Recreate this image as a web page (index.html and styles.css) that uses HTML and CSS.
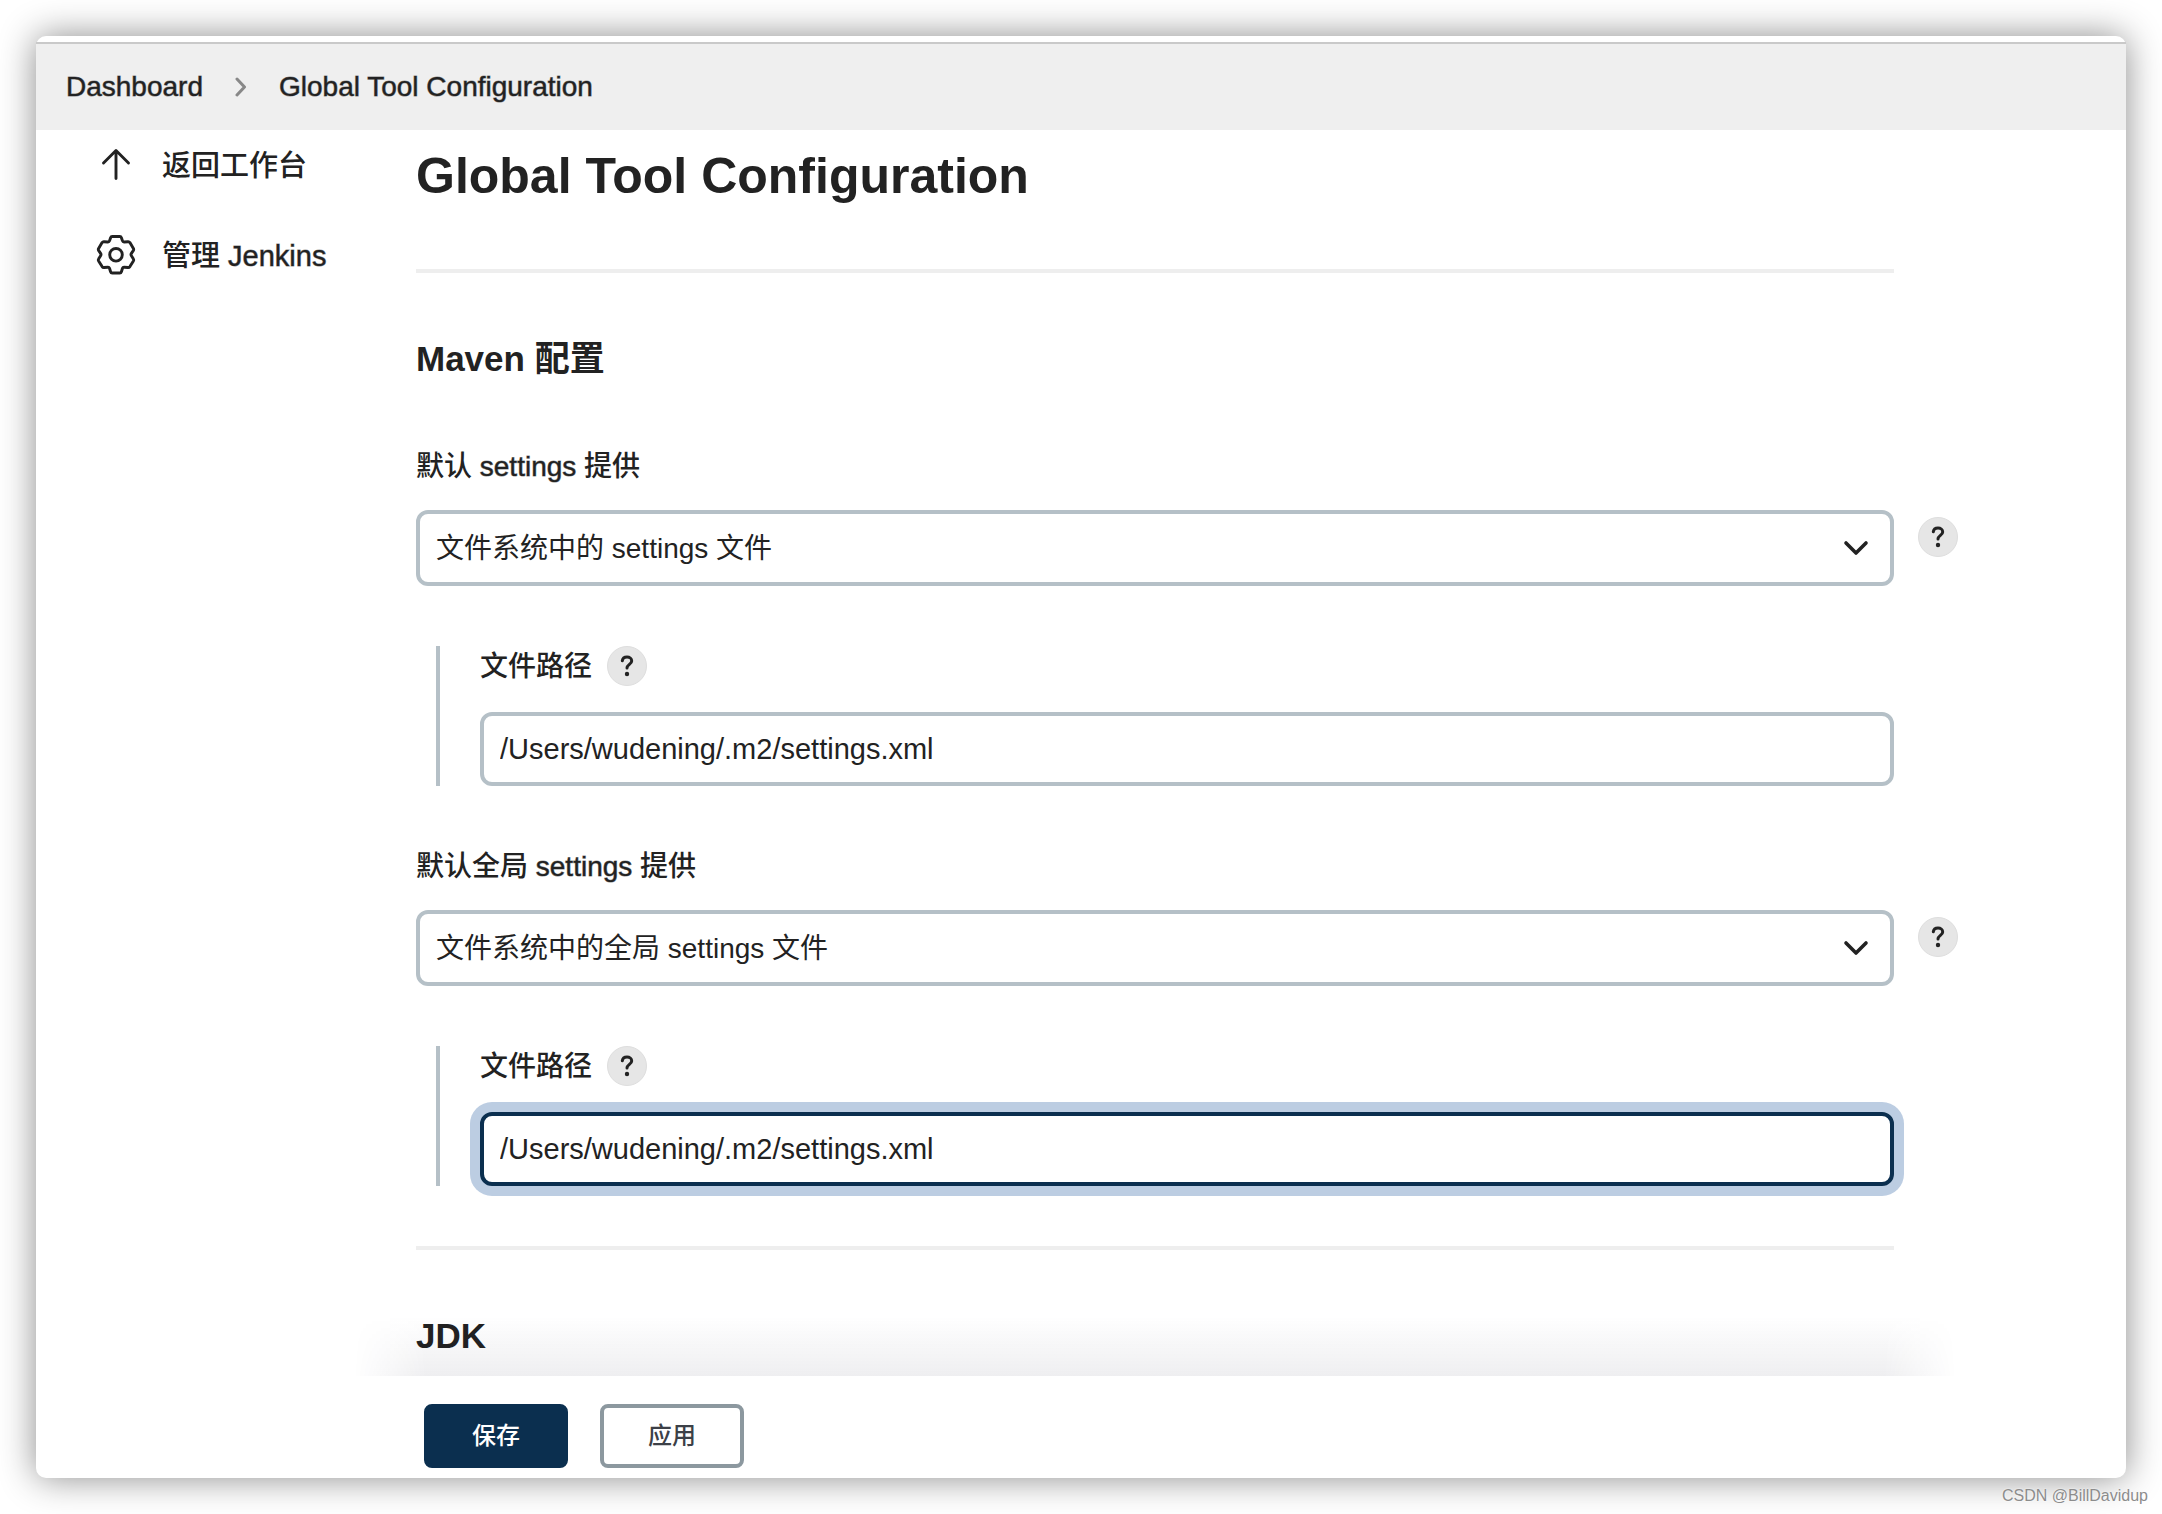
FILE: index.html
```html
<!DOCTYPE html>
<html lang="zh-CN">
<head>
<meta charset="utf-8">
<meta name="viewport" content="width=device-width, initial-scale=1">
<title>Global Tool Configuration</title>
<link rel="stylesheet" href="styles.css">
</head>
<body>
<div class="window">
  <nav class="breadcrumbs" aria-label="Breadcrumb">
    <a class="latin" href="#">Dashboard</a>
    <svg class="crumb-arrow" width="12" height="20" viewBox="0 0 12 20" fill="none" stroke="currentColor" stroke-width="3" stroke-linecap="round" stroke-linejoin="round"><path d="M2 2l7.500 8L2 18"/></svg>
    <a class="latin" href="#">Global Tool Configuration</a>
  </nav>

  <div class="page">
    <aside class="sidebar">
      <a class="task" href="#">
        <svg class="task-icon" width="40" height="42" viewBox="0 0 40 42" fill="none" stroke="currentColor" stroke-width="2.900" stroke-linecap="round" stroke-linejoin="round"><path d="M7.500 19L20 6.500 32.500 19M20 7v27.500"/></svg>
        <span class="task-text">返回工作台</span>
      </a>
      <a class="task" href="#">
        <svg class="task-icon" width="40" height="42" viewBox="0 0 40 42" fill="none" stroke="currentColor" stroke-width="2.900" stroke-linejoin="round"><path d="M16.200 2.500h7.600q1.200 0 1.600 1.200l1.100 3.200q.4 1.200 1.700 1.100l3.800-.3q1.200-.1 1.900.9l3.500 5.900q.6 1.100-.1 2.100l-1.900 2.800q-.8 1.200 0 2.400l1.900 3q.7 1 .1 2.100l-3.500 5.700q-.7 1-1.900.9l-3.800-.3q-1.300-.1-1.700 1.100l-1.100 3.400q-.4 1.300-1.600 1.300h-7.600q-1.200 0-1.600-1.300l-1.100-3.400q-.4-1.200-1.700-1.100l-3.800.3q-1.200.1-1.900-.9l-3.500-5.700q-.6-1.100.1-2.100l1.900-3q.8-1.200 0-2.400l-1.900-2.800q-.7-1-.1-2.100l3.500-5.900q.7-1 1.900-.9l3.800.3q1.300.1 1.700-1.100l1.100-3.200q.4-1.200 1.600-1.200z"/><circle cx="20" cy="20.800" r="6.300"/></svg>
        <span class="task-text">管理 <span class="latin">Jenkins</span></span>
      </a>
    </aside>

    <main class="main">
      <form class="form">
        <h1>Global Tool Configuration</h1>

        <section class="section">
          <h2>Maven 配置</h2>

          <label class="label" for="settings">默认 <span class="latin">settings</span> 提供</label>
          <div class="select-row">
            <div class="select-box">
              <select id="settings" class="control select"><option>文件系统中的 settings 文件</option></select>
              <svg class="chevron" width="28" height="18" viewBox="0 0 28 18" fill="none" stroke="currentColor" stroke-width="3.600" stroke-linecap="round" stroke-linejoin="round"><path d="M4 4l10 10L24 4"/></svg>
            </div>
            <button class="help" type="button" aria-label="Help"><svg width="14" height="22" viewBox="0 0 14 22" fill="none" stroke="currentColor" stroke-width="3" stroke-linecap="round" stroke-linejoin="round"><path d="M2.300 5.800C2.600 3.300 4.400 2 7 2s4.700 1.500 4.700 3.900c0 3.300-4.700 3.600-4.700 7.100"/><circle cx="7" cy="19" r="2.200" fill="currentColor" stroke="none"/></svg></button>
          </div>
          <div class="nested">
            <div class="nested-head">
              <label class="label" for="path">文件路径</label>
              <button class="help" type="button" aria-label="Help"><svg width="14" height="22" viewBox="0 0 14 22" fill="none" stroke="currentColor" stroke-width="3" stroke-linecap="round" stroke-linejoin="round"><path d="M2.300 5.800C2.600 3.300 4.400 2 7 2s4.700 1.500 4.700 3.900c0 3.300-4.700 3.600-4.700 7.100"/><circle cx="7" cy="19" r="2.200" fill="currentColor" stroke="none"/></svg></button>
            </div>
            <input id="path" class="control input" type="text" value="/Users/wudening/.m2/settings.xml" spellcheck="false">
          </div>

          <label class="label" for="global-settings">默认全局 <span class="latin">settings</span> 提供</label>
          <div class="select-row">
            <div class="select-box">
              <select id="global-settings" class="control select"><option>文件系统中的全局 settings 文件</option></select>
              <svg class="chevron" width="28" height="18" viewBox="0 0 28 18" fill="none" stroke="currentColor" stroke-width="3.600" stroke-linecap="round" stroke-linejoin="round"><path d="M4 4l10 10L24 4"/></svg>
            </div>
            <button class="help" type="button" aria-label="Help"><svg width="14" height="22" viewBox="0 0 14 22" fill="none" stroke="currentColor" stroke-width="3" stroke-linecap="round" stroke-linejoin="round"><path d="M2.300 5.800C2.600 3.300 4.400 2 7 2s4.700 1.500 4.700 3.900c0 3.300-4.700 3.600-4.700 7.100"/><circle cx="7" cy="19" r="2.200" fill="currentColor" stroke="none"/></svg></button>
          </div>
          <div class="nested">
            <div class="nested-head">
              <label class="label" for="global-path">文件路径</label>
              <button class="help" type="button" aria-label="Help"><svg width="14" height="22" viewBox="0 0 14 22" fill="none" stroke="currentColor" stroke-width="3" stroke-linecap="round" stroke-linejoin="round"><path d="M2.300 5.800C2.600 3.300 4.400 2 7 2s4.700 1.500 4.700 3.900c0 3.300-4.700 3.600-4.700 7.100"/><circle cx="7" cy="19" r="2.200" fill="currentColor" stroke="none"/></svg></button>
            </div>
            <input id="global-path" class="control input is-focused" type="text" value="/Users/wudening/.m2/settings.xml" spellcheck="false">
          </div>
        </section>

        <section class="section">
          <h2>JDK</h2>
        </section>

        <div class="actions">
          <button class="button primary" type="submit">保存</button>
          <button class="button" type="button">应用</button>
        </div>
      </form>
    </main>
  </div>
</div>
<p class="watermark">CSDN @BillDavidup</p>
</body>
</html>
```
FILE: styles.css
```css
:root {
  --text: #222;
  --line: #eee;
  --border: #b5c0c7;
  --navy: #0b2f4f;
}

* {
  box-sizing: border-box;
}

body {
  position: relative;
  min-height: 100vh;
  margin: 0;
  padding: 36px;
  background: #fff;
  color: var(--text);
  font: 28px/40px "Liberation Sans", "Noto Sans CJK SC", sans-serif;
}

a {
  color: inherit;
  text-decoration: none;
}

svg {
  display: block;
  flex: none;
}

.window {
  display: flex;
  flex-direction: column;
  min-height: calc(100vh - 72px);
  padding-top: 6px;
  border-radius: 10px;
  background: #fff;
  box-shadow: 0 0 36px rgba(0, 0, 0, 0.46);
}

/* Liberation Sans has no medium face; a faint stroke thickens it */
.latin {
  -webkit-text-stroke: 1px rgba(34, 34, 34, 0.5);
}

.breadcrumbs {
  display: flex;
  align-items: center;
  gap: 32px;
  height: 88px;
  padding: 0 30px;
  border-top: 2px solid #c9c9c9;
  background: #efefef;
}

.crumb-arrow {
  color: #888;
}

.page {
  display: flex;
  flex: 1;
}

.sidebar {
  display: flex;
  flex: 0 0 380px;
  flex-direction: column;
  gap: 48px;
  padding: 14px 24px 0 60px;
  font-size: 29px;
  font-weight: 500;
}

.task {
  display: flex;
  align-items: center;
  gap: 26px;
  height: 42px;
}

.task-text {
  padding-top: 2px;
}

.main {
  flex: 1;
  min-width: 0;
  padding-right: 232px;
}

.form {
  display: flex;
  flex-direction: column;
  min-height: 100%;
}

h1 {
  margin: 16px 0 63px;
  font-size: 50px;
  line-height: 60px;
}

.section {
  padding-top: 62px;
  border-top: 4px solid var(--line);
}

h2 {
  margin: 0;
  font-size: 35px;
  line-height: 48px;
}

h2 + .label {
  margin-top: 63px;
}

.label {
  display: block;
  padding-top: 2px;
  font-weight: 500;
  line-height: 38px;
}

.select-row {
  display: flex;
  align-items: flex-start;
  gap: 24px;
  margin: 24px -64px 60px 0;
}

.select-row .help {
  margin-top: 7px;
}

.select-box {
  position: relative;
  flex: 1;
}

.control {
  display: block;
  width: 100%;
  margin: 0;
  padding: 0 16px;
  border: 4px solid var(--border);
  border-radius: 12px;
  outline: 0;
  background: #fff;
  color: inherit;
  font: inherit;
}

.select {
  height: 76px;
  padding-top: 2px;
  appearance: none;
}

.input {
  height: 74px;
  font-size: 29px;
}

.is-focused {
  border-color: var(--navy);
  box-shadow: 0 0 0 10px #bccde2;
}

.chevron {
  position: absolute;
  top: 29px;
  right: 24px;
  pointer-events: none;
}

.help {
  display: flex;
  flex: none;
  align-items: center;
  justify-content: center;
  width: 40px;
  height: 40px;
  padding: 0;
  border: 1px solid #dedede;
  border-radius: 50%;
  background: #e6e6e6;
  color: inherit;
}

.nested {
  margin: 0 0 60px 20px;
  padding-left: 44px;
  background: linear-gradient(var(--border), var(--border)) left / 4px 100% no-repeat;
}

.nested-head {
  display: flex;
  align-items: center;
  gap: 15px;
  padding-bottom: 26px;
}

.actions {
  position: relative;
  display: flex;
  gap: 32px;
  margin-top: auto;
  padding: 28px 8px 10px;
}

.actions::before {
  content: "";
  position: absolute;
  right: -62px;
  bottom: 100%;
  left: -62px;
  height: 60px;
  background: linear-gradient(to top, rgba(20, 20, 50, 0.07), rgba(20, 20, 50, 0));
  -webkit-mask-image: linear-gradient(to right, transparent, #000 72px, #000 calc(100% - 72px), transparent);
  mask-image: linear-gradient(to right, transparent, #000 72px, #000 calc(100% - 72px), transparent);
  pointer-events: none;
}

.button {
  width: 144px;
  height: 64px;
  padding: 0;
  border: 4px solid #8c989f;
  border-radius: 8px;
  background: #fff;
  color: #3c4047;
  font: 500 24px/32px "Liberation Sans", "Noto Sans CJK SC", sans-serif;
}

.button.primary {
  border-color: var(--navy);
  background: var(--navy);
  color: #fff;
}

.watermark {
  position: absolute;
  right: 14px;
  bottom: 8px;
  margin: 0;
  color: #8c8c8c;
  font-size: 16px;
  line-height: 20px;
  text-shadow: 0 0 2px #fff;
}
```
